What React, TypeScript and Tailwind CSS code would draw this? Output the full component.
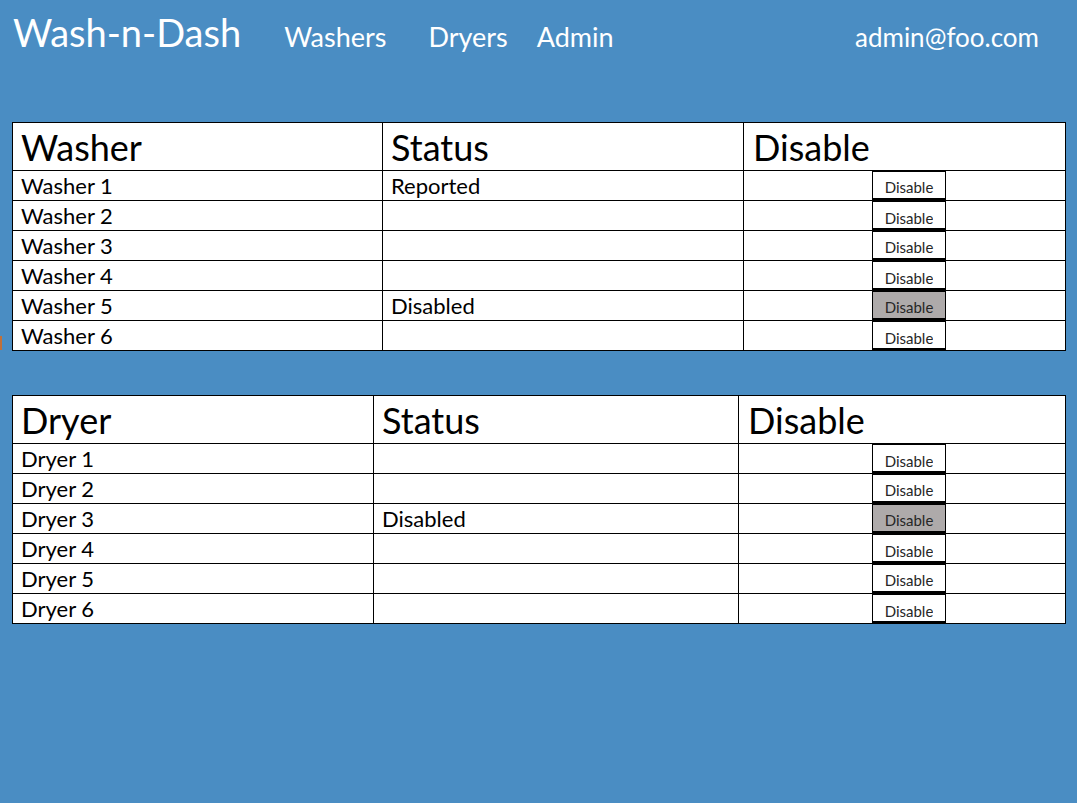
import React from 'react'

type Row = { name: string; status: string; gray?: boolean; clip?: boolean }

const washers: Row[] = [
  { name: 'Washer 1', status: 'Reported' },
  { name: 'Washer 2', status: '', clip: true },
  { name: 'Washer 3', status: '' },
  { name: 'Washer 4', status: '', clip: true },
  { name: 'Washer 5', status: 'Disabled', gray: true },
  { name: 'Washer 6', status: '', clip: true },
]

const dryers: Row[] = [
  { name: 'Dryer 1', status: '', clip: true },
  { name: 'Dryer 2', status: '' },
  { name: 'Dryer 3', status: 'Disabled', gray: true },
  { name: 'Dryer 4', status: '', clip: true },
  { name: 'Dryer 5', status: '' },
  { name: 'Dryer 6', status: '', clip: true },
]

function DisableButton({ gray, clip }: { gray?: boolean; clip?: boolean }) {
  return (
    <button
      className={`h-full w-[74px] border border-b-2 border-black flex justify-center ${
        clip ? 'pt-[8px]' : 'pt-[7px]'
      } ${gray ? 'bg-[#aeaaaa]' : 'bg-white'}`}
    >
      <span
        className={`block text-[15px] leading-[16px] text-[#262626] ${
          clip ? 'h-[14px] overflow-hidden' : ''
        }`}
      >
        Disable
      </span>
    </button>
  )
}

function MachineTable({
  label,
  rows,
  cols,
  btnGap,
}: {
  label: string
  rows: Row[]
  cols: string
  btnGap: string
}) {
  return (
    <div className="border border-black bg-white text-black">
      <div className={`grid ${cols} h-[47px]`}>
        <div className="flex items-center pl-2 text-[36px] leading-none">{label}</div>
        <div className="flex items-center pl-2 border-l border-black text-[36px] leading-none">Status</div>
        <div className="flex items-center pl-[9px] border-l border-black text-[36px] leading-none">Disable</div>
      </div>
      {rows.map(r => (
        <div key={r.name} className={`grid ${cols} h-[30px] border-t border-black`}>
          <div className="flex items-center pl-2 text-[22px] leading-none">{r.name}</div>
          <div className="flex items-center pl-2 border-l border-black text-[22px] leading-none">{r.status}</div>
          <div className={`flex border-l border-black ${btnGap}`}>
            <DisableButton gray={r.gray} clip={r.clip} />
          </div>
        </div>
      ))}
    </div>
  )
}

function App() {
  return (
    <div className="relative min-h-screen h-[803px] bg-[#4a8dc3] font-['Lato',sans-serif]">
      <header className="h-[80px] pt-[13px] flex items-baseline text-white">
        <span className="ml-[13px] text-[38px] leading-none">Wash-n-Dash</span>
        <nav className="flex items-baseline text-[27px] leading-none">
          <a className="ml-[43px]">Washers</a>
          <a className="ml-[42px]">Dryers</a>
          <a className="ml-[29px]">Admin</a>
        </nav>
        <span className="ml-auto mr-[38px] text-[26px] leading-none">admin@foo.com</span>
      </header>

      <main className="pt-[42px] px-[12px] pr-[11px] flex flex-col gap-[44px]">
        <MachineTable
          label="Washer"
          rows={washers}
          cols="grid-cols-[369px_361px_1fr]"
          btnGap="pl-[128px]"
        />
        <MachineTable
          label="Dryer"
          rows={dryers}
          cols="grid-cols-[360px_365px_1fr]"
          btnGap="pl-[133px]"
        />
      </main>

      <div className="absolute left-0 top-[336px] w-[2px] h-[14px] bg-[#c0703a]" />
    </div>
  )
}

export default App
